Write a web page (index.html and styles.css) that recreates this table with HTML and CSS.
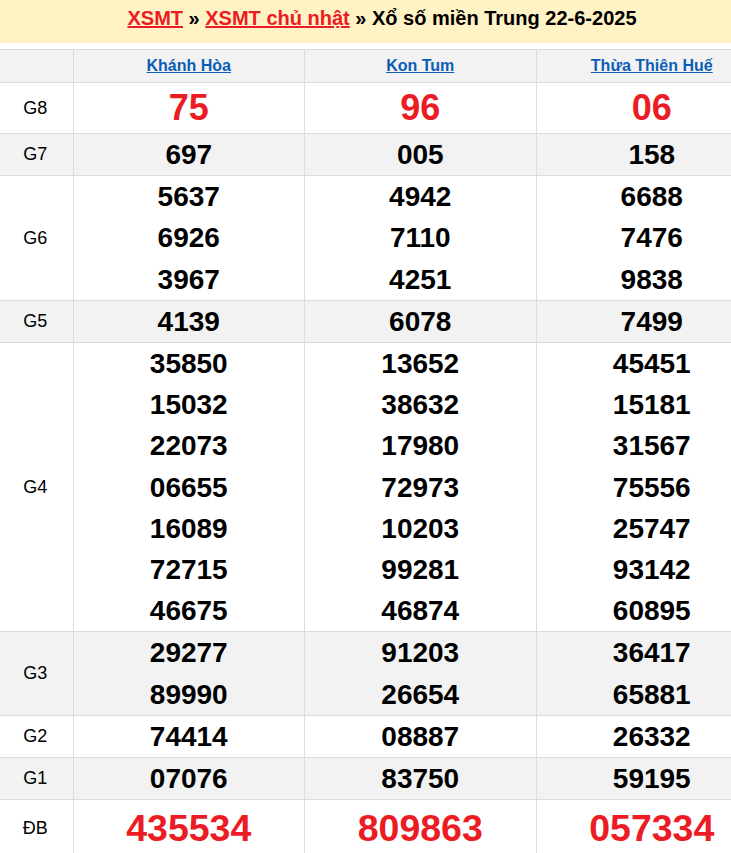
FILE: index.html
```html
<!DOCTYPE html>
<html lang="vi">
<head>
<meta charset="utf-8">
<title>XSMT chủ nhật</title>
<link rel="stylesheet" href="styles.css">
</head>
<body>
<div class="page">
  <h2 class="title"><a href="#">XSMT</a> » <a href="#">XSMT chủ nhật</a> » Xổ số miền Trung 22-6-2025</h2>
  <table class="kq">
    <colgroup><col class="c-label"><col><col><col></colgroup>
    <thead>
      <tr><th></th><th><a href="#">Khánh Hòa</a></th><th><a href="#">Kon Tum</a></th><th><a href="#">Thừa Thiên Huế</a></th></tr>
    </thead>
    <tbody>
      <tr class="g8"><td class="lbl">G8</td><td><div class="big">75</div></td><td><div class="big">96</div></td><td><div class="big">06</div></td></tr>
      <tr class="alt"><td class="lbl">G7</td><td><div>697</div></td><td><div>005</div></td><td><div>158</div></td></tr>
      <tr><td class="lbl">G6</td><td><div>5637</div><div>6926</div><div>3967</div></td><td><div>4942</div><div>7110</div><div>4251</div></td><td><div>6688</div><div>7476</div><div>9838</div></td></tr>
      <tr class="alt"><td class="lbl">G5</td><td><div>4139</div></td><td><div>6078</div></td><td><div>7499</div></td></tr>
      <tr><td class="lbl">G4</td>
        <td><div>35850</div><div>15032</div><div>22073</div><div>06655</div><div>16089</div><div>72715</div><div>46675</div></td>
        <td><div>13652</div><div>38632</div><div>17980</div><div>72973</div><div>10203</div><div>99281</div><div>46874</div></td>
        <td><div>45451</div><div>15181</div><div>31567</div><div>75556</div><div>25747</div><div>93142</div><div>60895</div></td></tr>
      <tr class="alt"><td class="lbl">G3</td><td><div>29277</div><div>89990</div></td><td><div>91203</div><div>26654</div></td><td><div>36417</div><div>65881</div></td></tr>
      <tr><td class="lbl">G2</td><td><div>74414</div></td><td><div>08887</div></td><td><div>26332</div></td></tr>
      <tr class="alt"><td class="lbl">G1</td><td><div>07076</div></td><td><div>83750</div></td><td><div>59195</div></td></tr>
      <tr class="db"><td class="lbl">ĐB</td><td><div class="big db-num">435534</div></td><td><div class="big db-num">809863</div></td><td><div class="big db-num">057334</div></td></tr>
    </tbody>
  </table>
</div>
</body>
</html>
```
FILE: styles.css
```css
html, body {
  margin: 0;
  padding: 0;
  background: #fff;
  font-family: "Liberation Sans", Arial, sans-serif;
}
.page {
  width: 768px;
}
.title {
  margin: 0 0 6px;
  padding-right: 4px;
  background: #fff2c4;
  height: 43px;
  line-height: 37px;
  text-align: center;
  font-size: 20px;
  font-weight: bold;
  color: #000;
}
.title a {
  color: #ec1c24;
  text-decoration: underline;
}
.kq {
  width: 100%;
  border-collapse: collapse;
  table-layout: fixed;
}
.c-label {
  width: 73px;
}
.kq th, .kq td {
  border: 1px solid #dcdcdc;
  padding: 0;
  text-align: center;
  vertical-align: middle;
}
.kq tr > :first-child {
  border-left: none;
}
.kq th {
  background: #f2f2f2;
  height: 32px;
  font-size: 16px;
  font-weight: bold;
}
.kq th a {
  color: #0b5eb5;
  text-decoration: underline;
}
.kq td {
  font-size: 28px;
  font-weight: bold;
  color: #000;
}
.kq td div {
  line-height: 41.2px;
}
.kq td.lbl {
  font-size: 18px;
  font-weight: normal;
  padding-right: 2px;
}
.kq tr.alt td {
  background: #f2f2f2;
}
.kq td div.big {
  font-size: 36px;
  line-height: 50px;
  color: #ec1c24;
}
.kq td div.db-num {
  font-size: 37.5px;
  line-height: 56px;
}
```
